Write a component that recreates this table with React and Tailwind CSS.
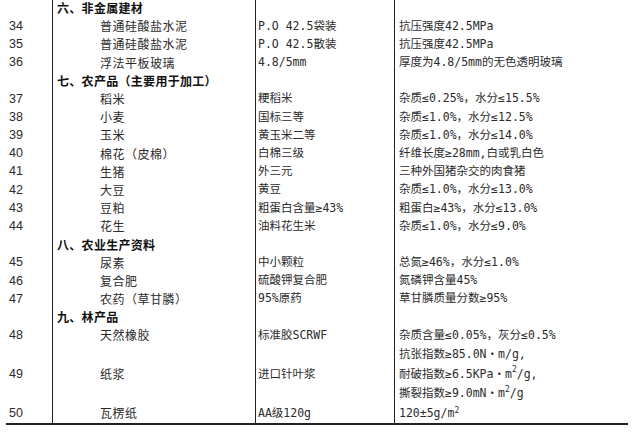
import React from 'react'

const Sq = () => <sup className="text-[8px]">2</sup>

const rows = [
  { section: '六、非金属建材' },
  { n: 34, name: '普通硅酸盐水泥', spec: 'P.O 42.5袋装', std: ['抗压强度42.5MPa'] },
  { n: 35, name: '普通硅酸盐水泥', spec: 'P.O 42.5散装', std: ['抗压强度42.5MPa'] },
  { n: 36, name: '浮法平板玻璃', spec: '4.8/5mm', std: ['厚度为4.8/5mm的无色透明玻璃'] },
  { section: '七、农产品（主要用于加工）' },
  { n: 37, name: '稻米', spec: '粳稻米', std: ['杂质≤0.25%，水分≤15.5%'] },
  { n: 38, name: '小麦', spec: '国标三等', std: ['杂质≤1.0%，水分≤12.5%'] },
  { n: 39, name: '玉米', spec: '黄玉米二等', std: ['杂质≤1.0%，水分≤14.0%'] },
  { n: 40, name: '棉花（皮棉）', spec: '白棉三级', std: ['纤维长度≥28mm,白或乳白色'] },
  { n: 41, name: '生猪', spec: '外三元', std: ['三种外国猪杂交的肉食猪'] },
  { n: 42, name: '大豆', spec: '黄豆', std: ['杂质≤1.0%，水分≤13.0%'] },
  { n: 43, name: '豆粕', spec: '粗蛋白含量≥43%', std: ['粗蛋白≥43%，水分≤13.0%'] },
  { n: 44, name: '花生', spec: '油料花生米', std: ['杂质≤1.0%，水分≤9.0%'] },
  { section: '八、农业生产资料' },
  { n: 45, name: '尿素', spec: '中小颗粒', std: ['总氮≥46%，水分≤1.0%'] },
  { n: 46, name: '复合肥', spec: '硫酸钾复合肥', std: ['氮磷钾含量45%'] },
  { n: 47, name: '农药（草甘膦）', spec: '95%原药', std: ['草甘膦质量分数≥95%'] },
  { section: '九、林产品' },
  { n: 48, name: '天然橡胶', spec: '标准胶SCRWF', std: ['杂质含量≤0.05%，灰分≤0.5%'] },
  {
    n: 49,
    name: '纸浆',
    spec: '进口针叶浆',
    h: 'h-[59.3px]',
    std: [
      '抗张指数≥85.0N・m/g,',
      <>耐破指数≥6.5KPa・m<Sq />/g,</>,
      <>撕裂指数≥9.0mN・m<Sq />/g</>,
    ],
  },
  { n: 50, name: '瓦楞纸', spec: 'AA级120g', h: 'h-[18.8px]', std: [<>120±5g/m<Sq /></>] },
]

const mono = { fontFamily: '"DejaVu Sans Mono", "Noto Sans CJK SC", monospace' }

export default function App() {
  return (
    <div
      className="w-[640px] h-[438px] bg-white overflow-hidden text-[#2b2b2b]"
      style={{ fontFamily: '"Noto Sans CJK SC", sans-serif' }}
    >
      <div className="ml-[6px] mt-[-1px] w-[622px] border-b-2 border-[#222]">
        {rows.map((r, i) =>
          r.section ? (
            <div key={i} className="flex h-[18.2px]">
              <div className="w-[46px]" />
              <div className="w-[203px] border-l border-[#222] pl-[4px] flex items-center text-[12px] font-bold tracking-[0.3px] text-[#111] whitespace-nowrap">
                {r.section}
              </div>
              <div className="w-[139px] border-l border-[#222]" />
              <div className="flex-1 border-l border-[#222]" />
            </div>
          ) : (
            <div key={i} className={`flex ${r.h || 'h-[18.2px]'}`}>
              <div
                className="w-[46px] pl-[3px] flex items-center text-[12.5px]"
                style={{ fontFamily: '"Liberation Sans", Arial, sans-serif' }}
              >
                {r.n}
              </div>
              <div className="w-[203px] border-l border-[#222] pl-[47px] flex items-center text-[12px] tracking-[0.5px] whitespace-nowrap">
                {r.name}
              </div>
              <div
                className="w-[139px] border-l border-[#222] pl-[2px] flex items-center text-[11.5px] whitespace-nowrap"
                style={mono}
              >
                {r.spec}
              </div>
              <div
                className="flex-1 border-l border-[#222] pl-[4px] flex flex-col justify-center text-[11.5px] whitespace-nowrap"
                style={mono}
              >
                {r.std.map((s, j) => (
                  <div key={j} className={r.std.length > 1 ? 'h-[19.8px] flex items-center' : ''}>
                    {s}
                  </div>
                ))}
              </div>
            </div>
          )
        )}
      </div>
    </div>
  )
}
